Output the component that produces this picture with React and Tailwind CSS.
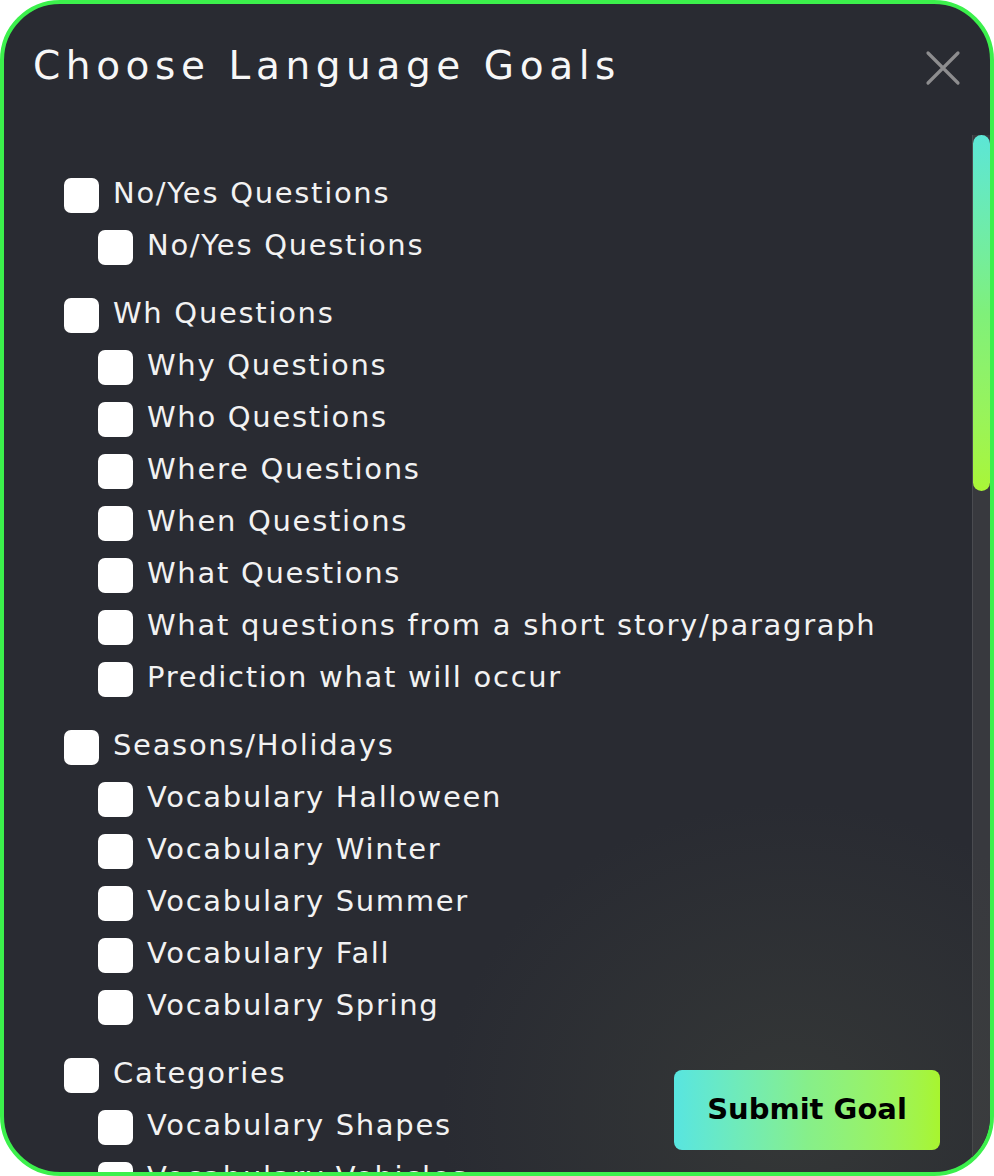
import React from "react";

const groups = [
  { title: "No/Yes Questions", items: ["No/Yes Questions"] },
  {
    title: "Wh Questions",
    items: [
      "Why Questions",
      "Who Questions",
      "Where Questions",
      "When Questions",
      "What Questions",
      "What questions from a short story/paragraph",
      "Prediction what will occur",
    ],
  },
  {
    title: "Seasons/Holidays",
    items: [
      "Vocabulary Halloween",
      "Vocabulary Winter",
      "Vocabulary Summer",
      "Vocabulary Fall",
      "Vocabulary Spring",
    ],
  },
  { title: "Categories", items: ["Vocabulary Shapes", "Vocabulary Vehicles", "Vocabulary Animals"] },
];

function Row({ label, sub }) {
  return (
    <div className={`flex h-[52px] items-center ${sub ? "pl-[34px]" : ""}`}>
      <div className="mt-[5px] h-[35px] w-[35px] shrink-0 rounded-[7px] bg-white" />
      <span className="ml-[14px] whitespace-nowrap text-[29px] leading-none tracking-[1.7px] text-[#f2f2f2]">{label}</span>
    </div>
  );
}

export default function App() {
  return (
    <div className="h-[1176px] w-[994px] bg-white" style={{ fontFamily: "'DejaVu Sans', sans-serif" }}>
      <div className="relative flex h-full w-full flex-col overflow-hidden rounded-[60px] border-4 border-[#3cf04c] bg-[#292b32]">
        <div className="flex items-start justify-between pl-[29px] pr-[29px] pt-[38px]">
          <h1 className="whitespace-nowrap text-[39px] leading-[48px] tracking-[5.6px] text-[#f7f7f7]">Choose Language Goals</h1>
          <svg width="36" height="36" viewBox="0 0 36 36" className="mt-[8px] shrink-0">
            <path d="M3 3 L33 33 M33 3 L3 33" stroke="#8d8d8f" strokeWidth="3.2" strokeLinecap="round" />
          </svg>
        </div>
        <div className="flex min-h-0 flex-1 pt-[45px]">
          <div className="flex-1 pl-[60px] pt-[32px]">
            {groups.map((g, i) => (
              <div key={i} className="mb-[16px]">
                <Row label={g.title} />
                {g.items.map((it) => (
                  <Row key={it} label={it} sub />
                ))}
              </div>
            ))}
          </div>
          <div className="relative w-[18px] shrink-0 border-l border-[#4a4b50] bg-[#38393e]">
            <div className="h-[356px] w-full rounded-full bg-gradient-to-b from-[#5ce6d6] via-[#7ff07a] to-[#a9f636]" />
          </div>
        </div>
        <div className="pointer-events-none absolute bottom-[-250px] right-[-150px] h-[620px] w-[700px] rounded-full bg-[radial-gradient(closest-side,rgba(64,68,60,0.5),rgba(41,43,50,0))]" />
        <button className="absolute bottom-[22px] right-[50px] flex h-[80px] w-[266px] items-center justify-center rounded-[8px] bg-gradient-to-r from-[#58e5e0] via-[#86ef8a] to-[#a8f52e] text-[29px] font-bold text-black">
          Submit Goal
        </button>
      </div>
    </div>
  );
}
